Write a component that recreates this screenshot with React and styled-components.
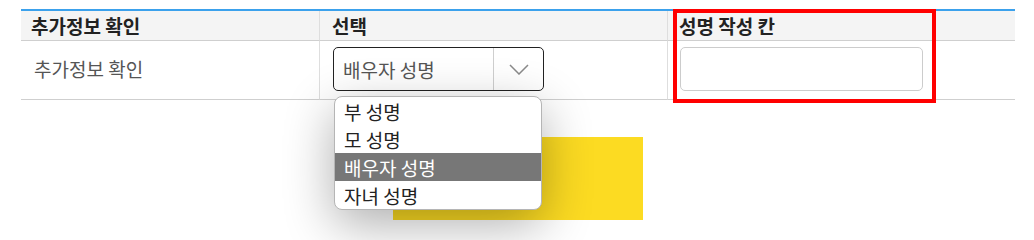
import React, { useState } from 'react';
import styled, { createGlobalStyle } from 'styled-components';

const GlobalStyle = createGlobalStyle`
  body {
    margin: 0;
    background: #fff;
    font-family: "Noto Sans CJK KR", "Noto Sans", sans-serif;
  }
`;

const Page = styled.div`
  width: 1034px;
  height: 240px;
  padding: 9px 0 0 21px;
  box-sizing: border-box;
  overflow: hidden;
`;

const Table = styled.div`
  position: relative;
  width: 994px;
  display: grid;
  grid-template-columns: 298px 348px 1fr;
  border-top: 2px solid #3ba1ec;
`;

const HeadCell = styled.div`
  height: 30px;
  box-sizing: border-box;
  display: flex;
  align-items: center;
  padding-left: ${props => props.pad}px;
  background: #f4f4f4;
  border-bottom: 1px solid #cfcfcf;
  border-left: ${props => props.first ? 'none' : '1px solid #dedede'};
  font-size: 19px;
  font-weight: 700;
  color: #222;
`;

const BodyCell = styled.div`
  height: 59px;
  box-sizing: border-box;
  display: flex;
  align-items: flex-start;
  padding: 6px 0 0 ${props => props.pad}px;
  border-bottom: 1px solid #cfcfcf;
  border-left: ${props => props.first ? 'none' : '1px solid #dedede'};
  position: relative;
`;

const CellText = styled.div`
  margin-top: 8px;
  font-size: 19px;
  color: #555;
`;

const Select = styled.div`
  width: 211px;
  height: 44px;
  box-sizing: border-box;
  display: flex;
  border: 1.5px solid #222;
  border-radius: 5px;
  background: #fff;
`;

const SelectValue = styled.div`
  flex: 1;
  display: flex;
  align-items: center;
  padding-left: 9px;
  font-size: 19px;
  color: #555;
`;

const SelectArrow = styled.div`
  width: 49px;
  display: flex;
  align-items: center;
  justify-content: center;
  border-left: 1px solid #cfcfcf;
`;

const Menu = styled.ul`
  position: absolute;
  left: 14px;
  top: 55px;
  z-index: 5;
  width: 208px;
  margin: 0;
  padding: 0;
  list-style: none;
  box-sizing: border-box;
  background: #fff;
  border: 1px solid #b5b5b5;
  border-radius: 8px;
  overflow: hidden;
  box-shadow: 0 14px 50px rgba(0, 0, 0, 0.32);
`;

const MenuItem = styled.li`
  height: 28px;
  display: flex;
  align-items: center;
  padding-left: 9px;
  font-size: 19px;
  color: ${props => props.active ? '#fff' : '#222'};
  background: ${props => props.active ? '#777' : 'transparent'};
`;

const NameInput = styled.input`
  width: 243px;
  height: 44px;
  box-sizing: border-box;
  border: 1px solid #cccccc;
  border-radius: 5px;
  outline: none;
`;

const Highlight = styled.div`
  position: absolute;
  left: 652px;
  top: -2px;
  width: 263px;
  height: 94px;
  box-sizing: border-box;
  border: 4px solid #ff0000;
  pointer-events: none;
`;

const Note = styled.div`
  width: 250px;
  height: 83px;
  margin: 37px 0 0 372px;
  background: #fcdb22;
`;

const Chevron = () => (
  <svg width="20" height="11" viewBox="0 0 20 11" fill="none">
    <path d="M1 1L10 10L19 1" stroke="#8a8a8a" strokeWidth="1.5" />
  </svg>
);

const options = ['부 성명', '모 성명', '배우자 성명', '자녀 성명'];

export default function App() {
  const [selected, setSelected] = useState('배우자 성명');
  return (
    <Page>
      <GlobalStyle />
      <Table>
        <HeadCell first pad={10}>추가정보 확인</HeadCell>
        <HeadCell pad={12}>선택</HeadCell>
        <HeadCell pad={11}>성명 작성 칸</HeadCell>

        <BodyCell first pad={13}>
          <CellText>추가정보 확인</CellText>
        </BodyCell>
        <BodyCell pad={13}>
          <Select>
            <SelectValue>{selected}</SelectValue>
            <SelectArrow>
              <Chevron />
            </SelectArrow>
          </Select>
          <Menu>
            {options.map(opt => (
              <MenuItem key={opt} active={opt === selected} onClick={() => setSelected(opt)}>
                {opt}
              </MenuItem>
            ))}
          </Menu>
        </BodyCell>
        <BodyCell pad={12}>
          <NameInput />
        </BodyCell>
        <Highlight />
      </Table>
      <Note />
    </Page>
  );
}
